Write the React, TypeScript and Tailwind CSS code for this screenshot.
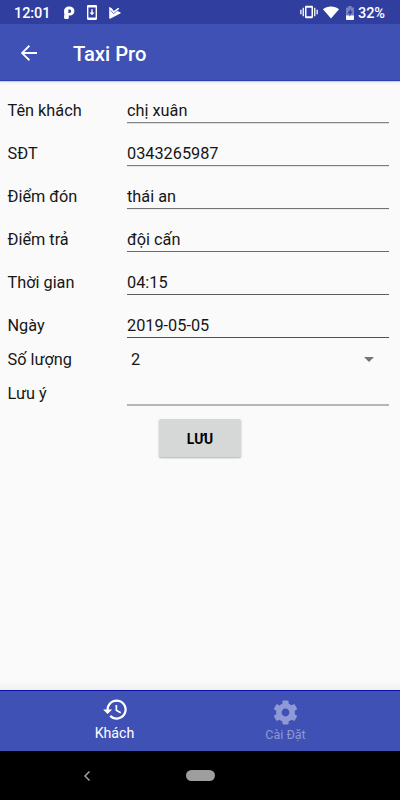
import * as React from 'react'
import { FaCog } from 'react-icons/fa'

const FIELDS = [
  { label: 'Tên khách', value: 'chị xuân', line: 'border-[#868686] shadow-[0_1px_0_#dcdcdc]' },
  { label: 'SĐT', value: '0343265987', line: 'border-[#7c7c7c] shadow-[0_1px_0_#e4e4e4]' },
  { label: 'Điểm đón', value: 'thái an', line: 'border-[#727272] shadow-[0_1px_0_#ececec]' },
  { label: 'Điểm trả', value: 'đội cấn', line: 'border-[#686868]' },
  { label: 'Thời gian', value: '04:15', line: 'border-[#5c5c5c]' },
  { label: 'Ngày', value: '2019-05-05', line: 'border-[#505050]' },
]

function StatusBar() {
  return (
    <div className="h-6 shrink-0 bg-[#303f9f] flex items-center text-white pl-[14px] pr-[15px]">
      <span className="w-[49px] text-[14.5px] leading-6 pt-[3px] font-medium tracking-[-0.1px] whitespace-nowrap">12:01</span>
      {/* Notification icons */}
      <svg width="12" height="14" viewBox="0 0 12 14" className="mt-px">
        <path
          fill="#fff"
          fillRule="evenodd"
          d="M1 5.500C1 2.500 3 .500 6.200.500S11.400 2.200 11.400 5 9.300 9.600 6.800 9.600H5.800v1.800c0 1-.5 1.600-1.500 1.600H2.200c-.8 0-1.100-.5-1.100-1.200V9.500C1.900 9.200 1 7.500 1 5.500zM5.400 3.500v3.400h1c1.100 0 1.700-.7 1.700-1.700s-.6-1.700-1.700-1.700z"
        />
      </svg>
      <svg width="10" height="15" viewBox="0 0 10 15" className="ml-[12px] mt-px">
        <path
          fill="#fff"
          fillRule="evenodd"
          d="M1.2 0h7.6C9.5 0 10 .5 10 1.200v12.600c0 .7-.5 1.200-1.200 1.200H1.200C.5 15 0 14.500 0 13.800V1.200C0 .5.5 0 1.200 0zM1.400 2.500v10h7.200v-10z"
        />
        <path fill="#fff" d="M4.300 4.200h1.400v3.300h1.800L5 10.300 2.500 7.500h1.800z" />
      </svg>
      <svg width="12" height="12" viewBox="0 0 12 12" className="ml-[12px] mt-px">
        <path fill="#fff" d="M.2.500C.2.100.7 0 1 .2L3 1.400 4.700 4 9.200.7 10.300 1.800 8.400 4 11.600 5.500c.4.200.4.600 0 .8L1.200 11.700c-.6.3-1 0-1-.6z" />
        <path fill="none" stroke="#303f9f" strokeWidth=".7" d="m1.600 3.400 3 3.200L9.500 2.700" />
      </svg>
      <div className="ml-auto flex items-center">
        <svg width="18" height="14" viewBox="0 0 18 14">
          <g fill="#fff">
            <path
              fillRule="evenodd"
              d="M6.200.8h5.600c.7 0 1.200.5 1.200 1.200v10c0 .7-.5 1.200-1.200 1.200H6.200C5.500 13.200 5 12.700 5 12V2c0-.7.5-1.200 1.200-1.200zm.3 1.900v8.600h5V2.700z"
            />
            <path d="M2.600 2.800h1.300v8.400H2.600zM14.100 2.800h1.300v8.400h-1.300zM.2 4.800h1.300v4.400H.2zM16.500 4.800h1.300v4.400h-1.300z" />
          </g>
        </svg>
        <svg width="16" height="13" viewBox="0 0 16 13" className="ml-[5px] mt-px">
          <path fill="#fff" d="M0 3.200C2.200 1.300 4.900.4 8 .4s5.800.9 8 2.800L8 12.600z" />
        </svg>
        <svg width="8" height="14" viewBox="0 0 8 14" className="ml-[7px] mt-px">
          <path fill="#fff" fillOpacity=".35" d="M2.300 0h3.400v1.500H8V10H0V1.500h2.300z" />
          <path fill="#303f9f" d="M5 3 1.600 7.300h1.900V10l3-4.400H5z" />
          <path fill="#fff" d="M0 9.500h3.200l.3 1 .9-1H8V13c0 .6-.3 1-.9 1H.9C.3 14 0 13.600 0 13z" />
        </svg>
        <span className="ml-[4px] text-[14.500px] leading-6 pt-[3px] font-medium tracking-[-0.1px] w-[27px] whitespace-nowrap">32%</span>
      </div>
    </div>
  )
}

function BottomTabs() {
  return (
    <nav className="relative h-[61px] shrink-0 bg-[#3f51b5] border-t border-[#0c12a8] flex justify-center leading-4">
      {/* Soft shadow over the form */}
      <div className="absolute left-0 right-0 -top-[9px] h-2 bg-linear-to-b from-[#fafafa] to-[#f1f1f1]" />
      <button className="w-[171px] flex flex-col items-center text-white text-[14.200px] pt-[5px]">
        <svg width="27" height="27" viewBox="0 0 24 24" fill="currentColor" className="ml-px">
          <path d="M13 3c-4.970 0-9 4.030-9 9H1l3.890 3.890.07.14L9 12H6c0-3.870 3.130-7 7-7s7 3.130 7 7-3.130 7-7 7c-1.930 0-3.680-.79-4.940-2.060l-1.420 1.420C8.270 19.990 10.510 21 13 21c4.970 0 9-4.030 9-9s-4.030-9-9-9zm-1 5v5l4.280 2.540.72-1.210-3.500-2.080V8H12z" />
        </svg>
        <span className="mt-[2px]">Khách</span>
      </button>
      <button className="w-[171px] flex flex-col items-center text-[#8f99d6] text-[12.500px] pt-[9px]">
        <FaCog size={25} />
        <span className="mt-[2px]">Cài Đặt</span>
      </button>
    </nav>
  )
}

export default function App() {
  const [values, setValues] = React.useState(FIELDS.map(f => f.value))

  return (
    <div className="w-[400px] h-[800px] overflow-hidden flex flex-col bg-[#fafafa] font-[Roboto,sans-serif]">
      <StatusBar />

      {/* App bar */}
      <header className="h-[57px] shrink-0 bg-[#3f51b5] border-b border-[#2d3fb0] shadow-[0_1px_0_#c9cce6,0_2px_3px_rgba(0,0,0,0.06)] flex items-center text-white">
        <button className="ml-[17px] mt-[2px]">
          <svg width="24" height="24" viewBox="0 0 24 24" fill="currentColor">
            <path d="M20 11.100H7.300l5.700-5.700L11.800 4l-8 8 8 8 1.200-1.400-5.700-5.700H20z" />
          </svg>
        </button>
        <h1 className="ml-[32px] pt-[4px] text-[20.200px] font-medium">Taxi Pro</h1>
      </header>

      {/* Customer form */}
      <main className="flex-1 pl-[7.500px] pr-[11px] pt-[7px] text-[16.300px] leading-5 text-[#161616]">
        {FIELDS.map((field, idx) => (
          <label key={field.label} className="h-[43px] flex items-start justify-between">
            <span className="w-[119px] pt-[13px]">{field.label}</span>
            <input
              value={values[idx]}
              onChange={e => setValues(values.map((v, i) => (i === idx ? e.target.value : v)))}
              className={`w-[262px] h-[35px] pt-[11px] border-b bg-transparent outline-none ${field.line}`}
            />
          </label>
        ))}

        <div className="h-[26px] flex items-start justify-between">
          <span className="w-[119px] pt-[4px]">Số lượng</span>
          <div className="w-[262px] pl-1 pr-[15px] pt-[4px] flex items-center justify-between">
            <span>2</span>
            <svg width="10" height="5" viewBox="0 0 10 5" className="-mt-[2px]">
              <path d="M0 0h10L5 5z" fill="#757575" />
            </svg>
          </div>
        </div>

        <label className="h-[47px] flex items-start justify-between">
          <span className="w-[119px] pt-[12px]">Lưu ý</span>
          <input className="w-[262px] h-[34px] border-b-2 border-[#b5b5b5] bg-transparent outline-none" />
        </label>

        <div className="flex justify-center pl-[3.500px]">
          <button className="w-[82px] h-[38px] pt-px rounded-[2px] bg-[#d6d7d7] shadow-[0_1px_2px_rgba(0,0,0,0.3)] text-[13.800px] font-bold text-black">
            LƯU
          </button>
        </div>
      </main>

      <BottomTabs />

      {/* System navigation */}
      <div className="h-[49px] shrink-0 bg-black flex items-center">
        <svg width="8" height="12" viewBox="0 0 8 12" className="ml-[83px]">
          <path d="M6.500 1.500 2 6l4.500 4.500" fill="none" stroke="#a0a0a0" strokeWidth="1.500" />
        </svg>
        <div className="ml-[95px] w-[29px] h-[11px] rounded-full bg-[#9e9e9e]" />
      </div>
    </div>
  )
}
